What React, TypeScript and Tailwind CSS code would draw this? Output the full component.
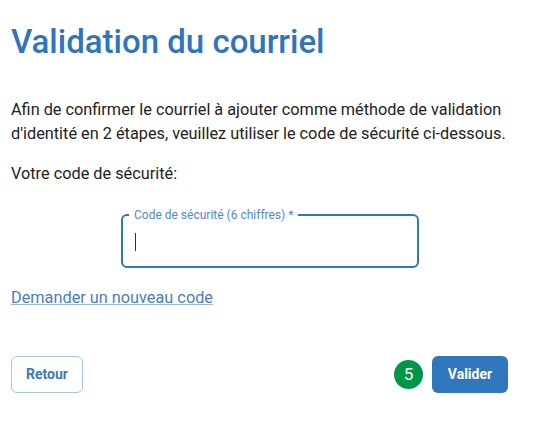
export default function App() {
  return (
    <div className="min-h-[433px] w-[545px] bg-white px-[11px] pt-[22px] font-['Roboto',sans-serif]">
      <h1 className="text-[33px] font-medium leading-[40px] text-[#2f74bd]">Validation du courriel</h1>

      <p className="mt-[36px] text-[16.3px] leading-[24px] text-[#222]">
        Afin de confirmer le courriel à ajouter comme méthode de validation d'identité en 2 étapes, veuillez utiliser le
        code de sécurité ci-dessous.
      </p>
      <p className="mt-[16px] text-[16.3px] leading-[24px] text-[#222]">Votre code de sécurité:</p>

      <div className="relative ml-[110px] mt-[28px] h-[54px] w-[298px] rounded-[6px] border-2 border-[#2f76bc] px-[12px] pt-[17px]">
        <span className="absolute -top-[8px] left-[6px] bg-white px-[5px] text-[12px] leading-[14px] text-[#4f8ad0]">
          Code de sécurité (6 chiffres) *
        </span>
        <div className="h-[18px] w-px bg-[#333]" />
      </div>

      <a href="#" className="mt-[18px] inline-block text-[16.3px] leading-[24px] text-[#4a7cc2] underline decoration-[#9bb7df]">
        Demander un nouveau code
      </a>

      <div className="mt-[46px] flex items-center justify-between pr-[26px]">
        <button className="h-[37px] w-[72px] rounded-[6px] border border-[#a7c4e8] text-[14px] font-bold text-[#3d78bf]">
          Retour
        </button>
        <div className="flex items-center gap-[9px]">
          <span className="flex h-[29px] w-[29px] items-center justify-center rounded-full bg-[#00964a] text-[17px] text-white">
            5
          </span>
          <button className="h-[37px] w-[76px] rounded-[6px] bg-[#2f76bc] text-[14px] font-bold text-white">Valider</button>
        </div>
      </div>
    </div>
  );
}
